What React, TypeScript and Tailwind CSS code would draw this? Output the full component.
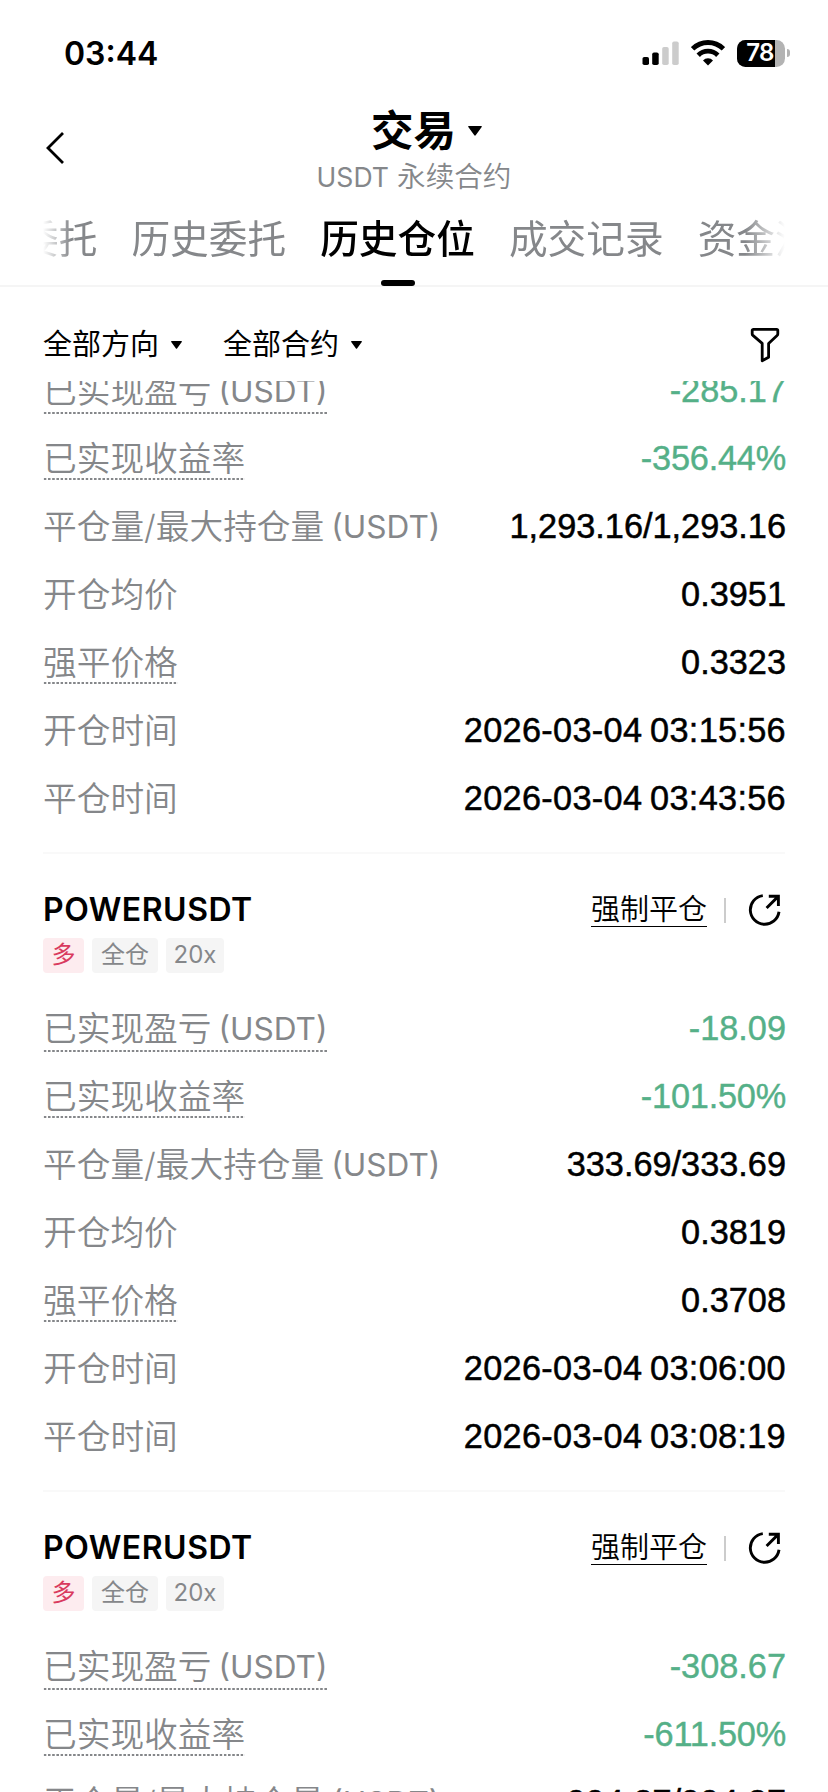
import clsx from 'clsx';

type Row = {
  label: string;
  unit?: string;
  value: string;
  hint?: boolean;
  loss?: boolean;
  time?: boolean;
};

type Position = {
  id: number;
  symbol: string;
  rows: Row[];
};

const buildRows = (
  pnl: string,
  rate: string,
  volume: string,
  entry: string,
  liq: string,
  openedAt: string,
  closedAt: string,
): Row[] => [
  { label: '已实现盈亏', unit: '(USDT)', value: pnl, hint: true, loss: true },
  { label: '已实现收益率', value: rate, hint: true, loss: true },
  { label: '平仓量/最大持仓量', unit: '(USDT)', value: volume },
  { label: '开仓均价', value: entry },
  { label: '强平价格', value: liq, hint: true },
  { label: '开仓时间', value: openedAt, time: true },
  { label: '平仓时间', value: closedAt, time: true },
];

const positions: Position[] = [
  {
    id: 1,
    symbol: 'POWERUSDT',
    rows: buildRows('-285.17', '-356.44%', '1,293.16/1,293.16', '0.3951', '0.3323', '2026-03-04 03:15:56', '2026-03-04 03:43:56'),
  },
  {
    id: 2,
    symbol: 'POWERUSDT',
    rows: buildRows('-18.09', '-101.50%', '333.69/333.69', '0.3819', '0.3708', '2026-03-04 03:06:00', '2026-03-04 03:08:19'),
  },
  {
    id: 3,
    symbol: 'POWERUSDT',
    // only the first rows fit on the screen
    rows: buildRows('-308.67', '-611.50%', '994.27/994.27', '', '', '', '').slice(0, 3),
  },
];

const tabs = ['当前委托', '历史委托', '历史仓位', '成交记录', '资金流水'];

function Caret({ className }: { className?: string }) {
  return (
    <svg viewBox="0 0 14 10" className={className} fill="currentColor">
      <path d="M0.8 0h12.4c.6 0 .9.6.5 1.1L7.7 9.3c-.4.5-1 .5-1.4 0L.3 1.1C-.1.6.2 0 .8 0Z" />
    </svg>
  );
}

function StatusBar() {
  return (
    <div className="flex h-[106px] items-center justify-between pr-[38px] pl-[64px]">
      <span className="pt-[2px] text-[32px] leading-none font-semibold">03:44</span>
      <div className="flex items-center gap-[12px]">
        <svg width="37" height="26" viewBox="0 0 37 26">
          <rect x="0.5" y="17" width="6.5" height="8" rx="1.8" fill="#000" />
          <rect x="10.2" y="12.5" width="6.5" height="12.5" rx="1.8" fill="#000" />
          <rect x="20.2" y="7" width="6.5" height="18" rx="1.8" fill="#ccc" />
          <rect x="30.2" y="1.5" width="6.5" height="23.5" rx="1.8" fill="#ccc" />
        </svg>
        <svg width="34" height="26" viewBox="0 0 34 26" fill="none" stroke="#000" strokeWidth="4.8">
          <path d="M1.6 8.8a22 22 0 0 1 30.8 0" />
          <path d="M7.2 15.2a14 14 0 0 1 19.6 0" />
          <path d="M12 20.4a7 7 0 0 1 10 0L17 25.4Z" fill="#000" stroke="none" />
        </svg>
        <div className="flex items-center gap-[2px]">
          <div className="relative h-[27px] w-[48px] overflow-hidden rounded-[8.5px] bg-[#b3b3b3]">
            <div className="h-full w-[38px] bg-black" />
            <span className="absolute inset-0 flex items-center justify-center pr-[2px] text-[24px] leading-none font-semibold tracking-[-0.8px] text-white">
              78
            </span>
          </div>
          <div className="h-[8px] w-[3px] rounded-r-full bg-[#b3b3b3]" />
        </div>
      </div>
    </div>
  );
}

function Header() {
  return (
    <div className="grid h-[93px] grid-cols-[1fr_auto_1fr] items-center">
      <svg
        width="20"
        height="34"
        viewBox="0 0 20 34"
        fill="none"
        stroke="#000"
        strokeWidth="2.8"
        className="mt-[-11px] ml-[45px]"
      >
        <path d="M18 2 3 17l15 15" />
      </svg>
      <div className="flex flex-col items-center pt-[2px]">
        <div className="flex h-[46px] items-center gap-[12px] pl-[25px]">
          <h1 className="text-[42.5px] leading-[46px] font-bold">交易</h1>
          <Caret className="h-[10px] w-[14px]" />
        </div>
        <div className="text-[28.6px] leading-[46px] font-[350] text-[#85878a]">
          <span className="text-[26.6px] font-normal">USDT</span> 永续合约
        </div>
      </div>
      <div />
    </div>
  );
}

function Tabs() {
  return (
    <div className="h-[88px] border-b-2 border-[#f5f5f5] px-[43px]">
      <div className="flex h-[88px] justify-center overflow-hidden mask-[linear-gradient(to_right,transparent,black_28px,black_calc(100%-40px),transparent)]">
        <div className="ml-[-33px] flex shrink-0 gap-[34px]">
          {tabs.map((tab) => {
            const active = tab === '历史仓位';
            return (
              <div
                key={tab}
                className={clsx(
                  'relative h-full shrink-0 text-[38.7px] leading-[80px]',
                  active ? 'font-medium text-black' : 'text-[#85878a]',
                )}
              >
                {tab}
                {active && (
                  <div className="absolute bottom-[1px] left-1/2 h-[6px] w-[34px] -translate-x-1/2 rounded-full bg-black" />
                )}
              </div>
            );
          })}
        </div>
      </div>
    </div>
  );
}

function Filters() {
  return (
    <div className="flex h-[94px] items-center gap-[41px] pt-[21px] pr-[48px] pl-[43px] text-[29px]">
      {['全部方向', '全部合约'].map((name) => (
        <div key={name} className="flex items-center gap-[12px]">
          {name}
          <Caret className="h-[8px] w-[11px]" />
        </div>
      ))}
      <svg
        width="30"
        height="36"
        viewBox="0 0 30 36"
        fill="none"
        stroke="#000"
        strokeWidth="2.8"
        strokeLinejoin="round"
        className="ml-auto"
      >
        <path d="M3.4 2.4h23.2c.7 0 1.2.5 1.2 1.2v3.4c0 .6-.2 1-.7 1.4L18.6 16.4V30.2l-6.4 3.6V16.4L2.9 8.4C2.4 8 2.2 7.6 2.2 7V3.6c0-.7.5-1.2 1.2-1.2Z" />
      </svg>
    </div>
  );
}

function PositionRow({ row }: { row: Row }) {
  return (
    <div className="flex h-[68px] items-center justify-between">
      <div className="relative flex items-center text-[33.7px] leading-[40px] font-[350] text-[#85878a]">
        {row.label}
        {row.unit && <span className="ml-[7px] text-[31.6px] font-normal">{row.unit}</span>}
        {row.hint && (
          <div
            className={clsx(
              'absolute right-0 left-0 h-[2px] bg-[radial-gradient(circle,#85878a_1px,transparent_1.3px)] bg-size-[4.2px_2px]',
              row.unit ? 'bottom-[-3px]' : 'bottom-[-1px]',
            )}
          />
        )}
      </div>
      <span
        className={clsx(
          "mr-[-1px] font-['Liberation_Sans',sans-serif] text-[34.3px]",
          row.loss
            ? 'text-[#55b088] [-webkit-text-stroke:0.4px_#55b088]'
            : 'text-black [-webkit-text-stroke:0.5px_black]',
          row.time && 'tracking-[0.3px] [word-spacing:-2px]',
          row.value.endsWith('%') && 'tracking-[-0.2px]',
        )}
      >
        {row.value}
      </span>
    </div>
  );
}

function PositionCard({ position }: { position: Position }) {
  return (
    <div className="h-[638px] shrink-0 border-t-2 border-[#f9f9f9] pt-[38px]">
      <div className="flex h-[36px] items-center justify-between">
        <span className="text-[32px] font-semibold tracking-[0.5px]">{position.symbol}</span>
        <div className="flex items-center pr-[4px]">
          <span className="border-b-[1.5px] border-black text-[29px] leading-[33px] font-[350]">强制平仓</span>
          <div className="mr-[22px] ml-[17px] h-[25px] w-[2px] bg-[#ccc]" />
          <svg width="33" height="34" viewBox="0 0 33 34" fill="none" stroke="#000" strokeWidth="2.9">
            <path d="M14.8 2.6A14.4 14.4 0 1 0 31 18.8" />
            <path d="M18.6 15 30 3.6M20.8 3.2h9.6v9.8" />
          </svg>
        </div>
      </div>
      <div className="mt-[10px] flex h-[35px] gap-[8px] text-[24px] leading-[34px] text-[#85878a]">
        <span className="w-[41px] rounded-[4px] bg-[#fdecef] text-center text-[#d93a5e]">多</span>
        <span className="w-[66px] rounded-[4px] bg-[#f5f5f5] text-center">全仓</span>
        <span className="w-[58px] rounded-[4px] bg-[#f5f5f5] text-center">20x</span>
      </div>
      <div className="mt-[22px]">
        {position.rows.map((row) => (
          <PositionRow key={row.label} row={row} />
        ))}
      </div>
    </div>
  );
}

export default function App() {
  return (
    <div className="flex h-[1792px] w-[828px] flex-col overflow-hidden bg-white font-['Inter','Noto_Sans_CJK_SC',sans-serif] text-black">
      <StatusBar />
      <Header />
      <Tabs />
      <Filters />
      {/* History list, scrolled into the first position */}
      <div className="min-h-0 flex-1 overflow-hidden px-[43px]">
        <div className="mt-[-167px] flex flex-col">
          {positions.map((position) => (
            <PositionCard key={position.id} position={position} />
          ))}
        </div>
      </div>
    </div>
  );
}
